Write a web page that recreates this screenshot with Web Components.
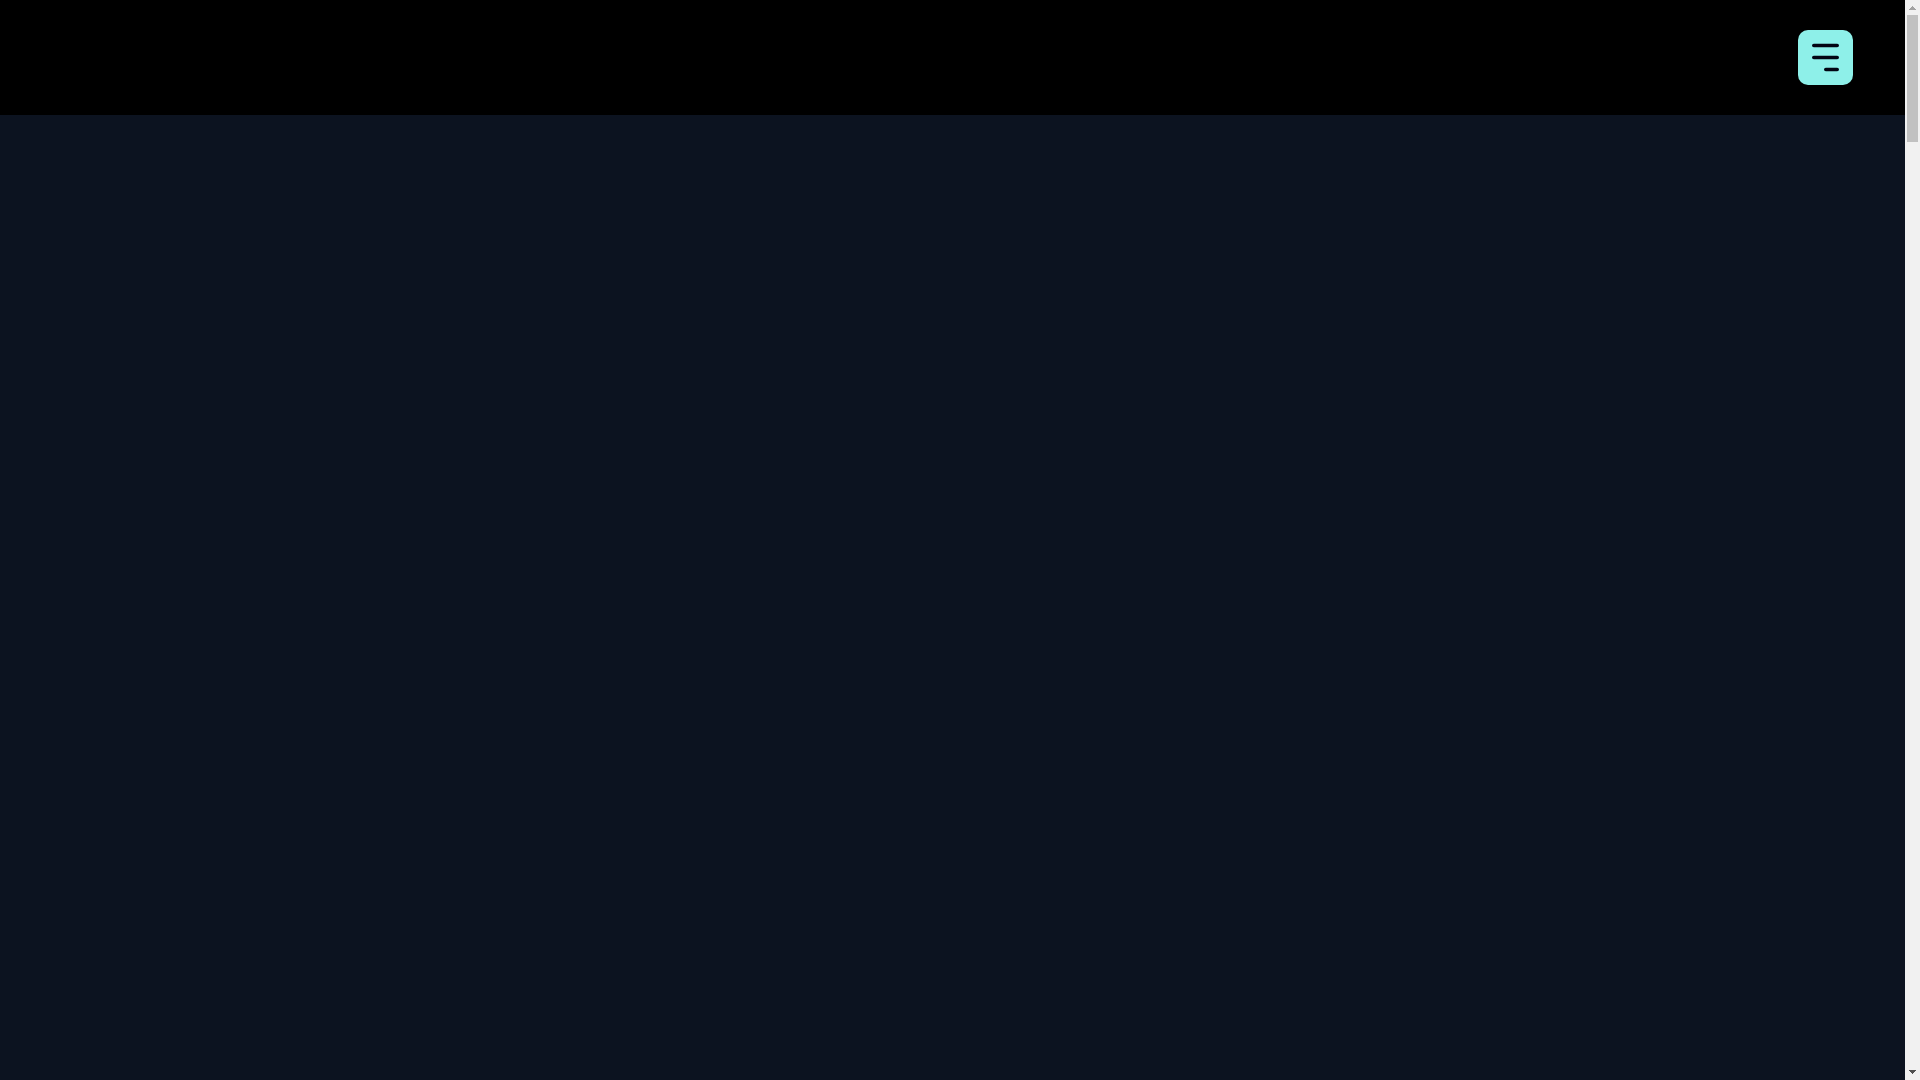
<!DOCTYPE html>
<html lang="en">
<head>
  <meta charset="UTF-8" />
  <meta name="viewport" content="width=device-width, initial-scale=1.0" />
  <title>Home</title>
  <style>
    :root {
      --clr-black: #000;
      --clr-navy: #0c1320;
      --clr-aqua: #8ef0e9;
      --clr-ink: #020412;
    }

    body {
      margin: 0;
      font-family: "Liberation Sans", sans-serif;
      background-color: var(--clr-navy);
    }
  </style>
</head>
<body>
  <page-shell>
    <site-header slot="header">
      <menu-button></menu-button>
    </site-header>
    <scroll-rail slot="rail"></scroll-rail>
  </page-shell>

  <script>
    const shellTemplate = document.createElement("template");

    shellTemplate.innerHTML = /* html */ `
      <style>
        :host {
          display: grid;
          grid-template-columns: 1fr auto;
          height: 100vh;
        }

        .page {
          display: flex;
          flex-direction: column;
          min-width: 0;
        }

        main {
          flex: 1;
          background-color: var(--clr-navy);
        }
      </style>
      <div class="page">
        <slot name="header"></slot>
        <main><slot></slot></main>
      </div>
      <slot name="rail"></slot>
    `;

    class PageShell extends HTMLElement {
      constructor() {
        super();
        this.root = this.attachShadow({ mode: "open" });
        this.root.appendChild(shellTemplate.content.cloneNode(true));
      }
    }

    const headerTemplate = document.createElement("template");

    headerTemplate.innerHTML = /* html */ `
      <style>
        :host {
          display: block;
        }

        header {
          display: flex;
          justify-content: flex-end;
          align-items: center;
          padding: 30px 52px;
          background-color: var(--clr-black);
        }
      </style>
      <header><slot></slot></header>
    `;

    class SiteHeader extends HTMLElement {
      constructor() {
        super();
        this.root = this.attachShadow({ mode: "open" });
        this.root.appendChild(headerTemplate.content.cloneNode(true));
      }
    }

    const menuTemplate = document.createElement("template");

    menuTemplate.innerHTML = /* html */ `
      <style>
        :host {
          display: block;
        }

        .menu {
          display: block;
          width: 55px;
          height: 55px;
          padding: 0;
          border: 0;
          border-radius: 10px;
          background-color: var(--clr-aqua);
          cursor: pointer;
        }

        .menu:hover {
          opacity: 0.9;
        }

        svg {
          display: block;
          fill: none;
          stroke: var(--clr-ink);
          stroke-width: 3.6;
          stroke-linecap: round;
        }
      </style>
      <button class="menu" type="button" aria-label="Open menu" aria-expanded="false">
        <svg width="55" height="55" viewBox="0 0 55 55" aria-hidden="true">
          <path d="M15.8 15.5H39.2M15.8 27.5H39.2M27.8 39.5H39.2" />
        </svg>
      </button>
    `;

    class MenuButton extends HTMLElement {
      constructor() {
        super();
        this.root = this.attachShadow({ mode: "open" });
        this.root.appendChild(menuTemplate.content.cloneNode(true));
      }

      connectedCallback() {
        this._open = false;
        this.button = this.shadowRoot.querySelector("button");
        this.button.addEventListener("click", () => this.toggle());
      }

      toggle() {
        this._open = !this._open;
        this.button.setAttribute("aria-expanded", this._open);
      }
    }

    const railTemplate = document.createElement("template");

    railTemplate.innerHTML = /* html */ `
      <style>
        :host {
          display: flex;
          flex-direction: column;
          width: 15px;
          background-color: #f1f1f1;
        }

        svg {
          display: block;
          shape-rendering: crispEdges;
        }

        .track {
          flex: 1;
          padding: 0 2px;
        }

        .thumb {
          height: 12.1%;
          background-color: #c1c1c1;
        }
      </style>
      <svg width="15" height="15" viewBox="0 0 15 15" fill="#a3a3a3" aria-hidden="true">
        <path d="M7 6h1v1h1v1h1v1h1v1H4V9h1V8h1V7h1z" />
      </svg>
      <div class="track"><div class="thumb"></div></div>
      <svg width="15" height="15" viewBox="0 0 15 15" fill="#505050" aria-hidden="true">
        <path d="M4 5h7v1h-1v1H9v1H8v1H7V8H6V7H5V6H4z" />
      </svg>
    `;

    class ScrollRail extends HTMLElement {
      constructor() {
        super();
        this.root = this.attachShadow({ mode: "open" });
        this.root.appendChild(railTemplate.content.cloneNode(true));
      }
    }

    customElements.define("page-shell", PageShell);
    customElements.define("site-header", SiteHeader);
    customElements.define("menu-button", MenuButton);
    customElements.define("scroll-rail", ScrollRail);
  </script>
</body>
</html>
